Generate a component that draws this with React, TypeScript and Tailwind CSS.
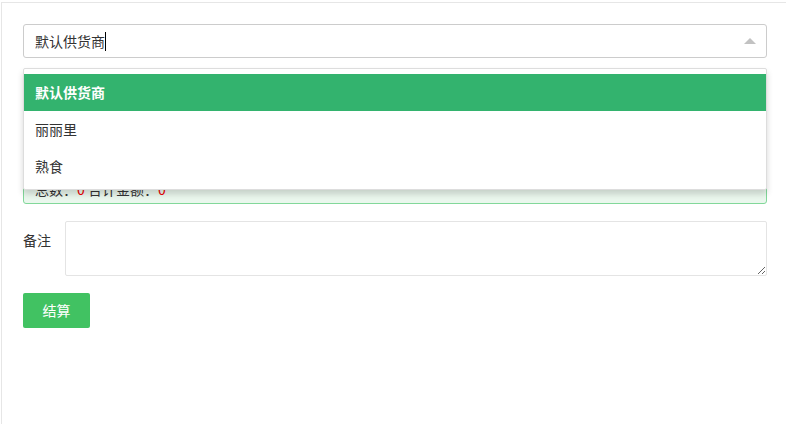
import React from "react";

export default function App() {
  const font = { fontFamily: '"Noto Sans CJK SC", "Noto Sans", sans-serif' };
  return (
    <div className="w-[786px] h-[424px] bg-white overflow-hidden" style={font}>
      <div className="ml-px mt-[2px] h-[422px] border-l border-t border-[#e6e6e6] pl-[21px] pr-[19px] pt-[21px] text-[14px] text-[#333]">
        <div className="relative">
          <div className="h-[34px] rounded-[3px] border border-[#cccccc] flex items-center pl-[11px] pr-[10px] bg-white">
            <span className="leading-[20px]">默认供货商</span>
            <span className="w-px h-[19px] bg-black" />
            <div className="flex-1" />
            <div className="w-0 h-0 border-l-[6px] border-r-[6px] border-b-[6px] border-l-transparent border-r-transparent border-b-[#c2c2c2]" />
          </div>
          <div className="absolute left-0 right-0 top-[44px] z-10 h-[122px] rounded-[2px] border border-[#dddddd] bg-white pt-[5px] shadow-[0_4px_6px_rgba(0,0,0,0.16)]">
            <div className="h-[37px] bg-[#33b36e] text-white font-bold flex items-center pl-[11px]">默认供货商</div>
            <div className="h-[37px] flex items-center pl-[11px]">丽丽里</div>
            <div className="h-[37px] flex items-center pl-[11px]">熟食</div>
          </div>
        </div>
        <div className="mt-[100px] rounded-[3px] border border-[#82d89a] bg-[#eaf7ed] pl-[11px] pt-[20px] pb-[4px] leading-[20px] text-[#333]">
          总数：<span className="text-[#e00]">0</span> 合计金额：<span className="text-[#e00]">0</span>
        </div>
        <div className="mt-[17px] flex">
          <div className="w-[42px] pt-[9px] leading-[20px]">备注</div>
          <textarea className="flex-1 h-[55px] rounded-[2px] border border-[#e4e4e4] outline-none" />
        </div>
        <button className="mt-[17px] w-[67px] h-[35px] rounded-[2px] bg-[#41c262] text-white text-[14px]">结算</button>
      </div>
    </div>
  );
}
